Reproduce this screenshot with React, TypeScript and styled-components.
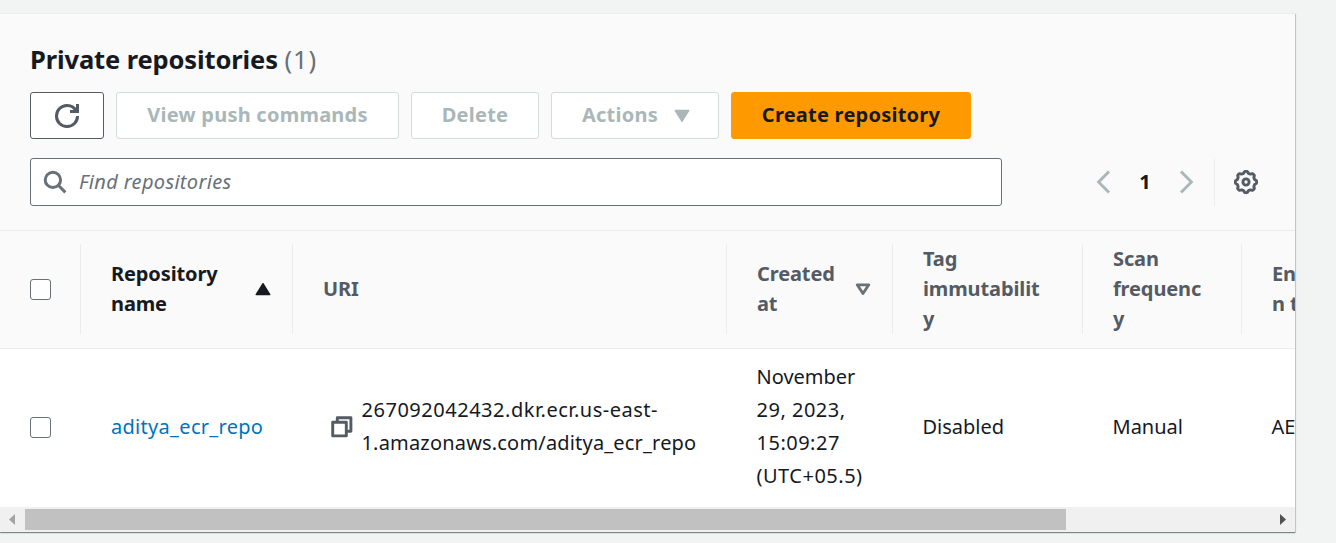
import React from 'react';
import styled, { createGlobalStyle } from 'styled-components';

const GlobalStyle = createGlobalStyle`
  *, *::before, *::after { box-sizing: border-box; }
  body {
    margin: 0;
    background: #f2f3f3;
    color: #16191f;
    font-family: "Noto Sans", "Open Sans", sans-serif;
    font-size: 20px;
    overflow: hidden;
  }
  button, input { font: inherit; }
  svg { display: block; flex: none; }
`;

const Page = styled.main`
  height: 543px;
  padding-top: 13px;
`;

const Panel = styled.section`
  width: 1295px;
  height: 519px;
  background: #fff;
  border-top: 1px solid #eaeded;
  box-shadow: 0 1px 1px 0 rgba(0, 28, 36, 0.4), 1px 1px 1px 0 rgba(0, 28, 36, 0.15);
  overflow: hidden;
`;

const PanelHeader = styled.header`
  height: 217px;
  padding: 27px 30px 0;
  background: #fafafa;
  border-bottom: 1px solid #eaeded;
`;

const Title = styled.h2`
  margin: 0 0 15px;
  font-size: 25.5px;
  line-height: 36px;
  font-weight: 700;
  letter-spacing: -0.12px;
`;

const Counter = styled.span`
  font-weight: 400;
  color: #687078;
  letter-spacing: 0.9px;
`;

const ButtonRow = styled.div`
  display: flex;
  gap: 12px;
`;

const Button = styled.button<{ $width: number; $kind?: 'normal' | 'primary' | 'disabled' }>`
  display: flex;
  align-items: center;
  justify-content: center;
  gap: 16px;
  width: ${(p) => p.$width}px;
  height: 47px;
  padding: 0 0 2px;
  border: 1px solid ${(p) => (p.$kind === 'primary' ? '#ff9900' : p.$kind === 'disabled' ? '#d5dbdb' : '#545b64')};
  border-radius: 3px;
  background: ${(p) => (p.$kind === 'primary' ? '#ff9900' : '#fff')};
  color: ${(p) => (p.$kind === 'primary' ? '#16191f' : p.$kind === 'disabled' ? '#aab7b8' : '#545b64')};
  font-weight: 700;
  letter-spacing: 0.24px;
  white-space: nowrap;
  & > svg { position: relative; top: 1px; }
`;

const MenuButton = styled(Button)`
  padding-left: 2px;
`;

const FilterRow = styled.div`
  display: flex;
  align-items: center;
  margin-top: 19px;
`;

const SearchBox = styled.label`
  display: flex;
  align-items: center;
  gap: 12.5px;
  width: 972px;
  height: 48px;
  padding-left: 11.5px;
  border: 1px solid #687078;
  border-radius: 3px;
  background: #fff;
`;

const SearchInput = styled.input`
  flex: 1;
  padding: 0 0 2px;
  border: 0;
  outline: 0;
  background: transparent;
  font-style: italic;
  letter-spacing: 0.33px;
  &::placeholder { color: #687078; opacity: 1; }
`;

const Pagination = styled.nav`
  display: flex;
  align-items: center;
  margin-left: 94px;
`;

const PageNumber = styled.span`
  width: 68px;
  padding-bottom: 1px;
  text-align: center;
  font-weight: 700;
`;

const Settings = styled.div`
  display: flex;
  align-items: center;
  height: 47px;
  margin-left: 20px;
  padding-left: 19px;
  border-left: 1px solid #eaeded;
`;

const Row = styled.div`
  display: grid;
  grid-template-columns: 81px 212px 434px 166px 190px 159px 190px;
`;

const HeadRow = styled(Row)`
  height: 118px;
  padding: 13px 0 14px;
  background: #fafafa;
  border-bottom: 1px solid #eaeded;
`;

const BodyRow = styled(Row)`
  height: 158px;
`;

const HeadCell = styled.div<{ $active?: boolean }>`
  display: flex;
  align-items: center;
  justify-content: space-between;
  height: 90px;
  padding: 0 21px 1px 30px;
  border-right: 1px solid #eaeded;
  color: ${(p) => (p.$active ? '#16191f' : '#545b64')};
  font-weight: 700;
  line-height: 30px;
  letter-spacing: -0.12px;
  white-space: pre;
`;

const CheckHeadCell = styled(HeadCell)`
  padding-bottom: 0;
`;

const Cell = styled.div<{ $spacing?: number }>`
  display: flex;
  align-items: center;
  padding: 0 0 4px 29.5px;
  line-height: 33px;
  letter-spacing: ${(p) => p.$spacing ?? 0}px;
  white-space: pre;
`;

const NameCell = styled(Cell)`
  padding-left: 30px;
`;

const CheckCell = styled(Cell)`
  padding: 0 0 1px 30px;
`;

const UriCell = styled(Cell)`
  gap: 9px;
  padding-left: 37.5px;
  & > svg { position: relative; top: 1px; }
`;

const Line = styled.span<{ $spacing: number }>`
  display: block;
  letter-spacing: ${(p) => p.$spacing}px;
`;

const Checkbox = styled.span`
  width: 21px;
  height: 21px;
  border: 1px solid #687078;
  border-radius: 3px;
  background: #fff;
`;

const RepoLink = styled.a`
  color: #0073bb;
  text-decoration: none;
`;

const Scrollbar = styled.div`
  display: flex;
  align-items: center;
  justify-content: space-between;
  height: 25px;
  padding-right: 9px;
  background: #f0f0f0;
`;

const ScrollLeft = styled.div`
  width: 25px;
  padding-left: 9px;
`;

const Thumb = styled.div`
  width: 1041px;
  height: 21px;
  margin-right: auto;
  background: #c1c1c1;
`;

const RefreshIcon = () => (
  <svg width="24" height="24" viewBox="0 0 16 16" fill="none" stroke="currentColor" strokeWidth="2">
    <path d="M10 5h5V0" />
    <path d="M15 8a6.96 6.96 0 0 1-7 7 6.96 6.96 0 0 1-7-7 6.96 6.96 0 0 1 7-7 6.87 6.87 0 0 1 6.3 4" />
  </svg>
);

const SearchIcon = () => (
  <svg width="24" height="24" viewBox="0 0 16 16" fill="none" stroke="#687078" strokeWidth="2">
    <circle cx="6.6" cy="6.6" r="5.1" />
    <path d="M10.2 10.2l4.7 4.7" />
  </svg>
);

const Chevron = ({ right }: { right?: boolean }) => (
  <svg width="15" height="24" viewBox="0 0 15 24" fill="none" stroke="#aab7b8" strokeWidth="2.9">
    <path d={right ? 'M2 1.5l10.4 10.5L2 22.5' : 'M13 1.5L2.6 12 13 22.5'} />
  </svg>
);

const gearPath = (() => {
  const points: string[] = [];
  for (let i = 0; i < 96; i++) {
    const a = (i / 96) * Math.PI * 2;
    const r = 9.8 + 0.9 * Math.tanh(2.2 * Math.cos(8 * a));
    points.push(`${(12 + r * Math.sin(a)).toFixed(2)} ${(12 - r * Math.cos(a)).toFixed(2)}`);
  }
  return `M${points.join('L')}Z`;
})();

const GearIcon = () => (
  <svg width="24" height="24" viewBox="0 0 24 24" fill="none" stroke="#545b64" strokeLinejoin="round">
    <path d={gearPath} strokeWidth="2.9" />
    <circle cx="12" cy="12" r="3.1" strokeWidth="2.9" />
  </svg>
);

const CopyIcon = () => (
  <svg width="22" height="22" viewBox="0 0 22 22" fill="none" stroke="#545b64" strokeWidth="2.9" strokeLinejoin="round">
    <path d="M1.7 6.3h13.6v13.6H1.7z" />
    <path d="M6.3 6.3V1.8h13.6v13.5h-4.6" />
  </svg>
);

const Triangle = ({ up, hollow }: { up?: boolean; hollow?: boolean }) => (
  <svg width="16" height="14" viewBox="0 0 16 14" strokeLinejoin="round" strokeWidth={hollow ? 2.8 : 1.4}
    fill={hollow ? 'none' : 'currentColor'} stroke={hollow ? '#687078' : 'currentColor'}>
    <path d={up ? 'M8 1.7L14.8 12.5H1.2z' : hollow ? 'M2.2 2.8h11.6L8 11.6z' : 'M1.2 1.5h13.6L8 12.3z'} />
  </svg>
);

const ScrollArrow = ({ right }: { right?: boolean }) => (
  <svg width="6" height="11" viewBox="0 0 6 11" fill={right ? '#505050' : '#a3a3a3'}>
    <path d={right ? 'M0 0l6 5.5L0 11z' : 'M6 0L0 5.5 6 11z'} />
  </svg>
);

export default function App() {
  return (
    <>
      <GlobalStyle />
      <Page>
        <Panel>
          <PanelHeader>
            <Title>Private repositories <Counter>(1)</Counter></Title>
            <ButtonRow>
              <Button $width={74} aria-label="Refresh"><RefreshIcon /></Button>
              <Button $width={283} $kind="disabled">View push commands</Button>
              <Button $width={128} $kind="disabled">Delete</Button>
              <MenuButton $width={168} $kind="disabled">Actions<Triangle /></MenuButton>
              <Button $width={240} $kind="primary">Create repository</Button>
            </ButtonRow>
            <FilterRow>
              <SearchBox>
                <SearchIcon />
                <SearchInput placeholder="Find repositories" />
              </SearchBox>
              <Pagination>
                <Chevron />
                <PageNumber>1</PageNumber>
                <Chevron right />
              </Pagination>
              <Settings><GearIcon /></Settings>
            </FilterRow>
          </PanelHeader>
          <HeadRow>
            <CheckHeadCell><Checkbox /></CheckHeadCell>
            <HeadCell $active>{'Repository\nname'}<Triangle up /></HeadCell>
            <HeadCell>URI</HeadCell>
            <HeadCell>{'Created\nat'}<Triangle hollow /></HeadCell>
            <HeadCell>{'Tag\nimmutabilit\ny'}</HeadCell>
            <HeadCell>{'Scan\nfrequenc\ny'}</HeadCell>
            <HeadCell>{'Encryptio\nn type'}</HeadCell>
          </HeadRow>
          <BodyRow>
            <CheckCell><Checkbox /></CheckCell>
            <NameCell $spacing={0.3}><RepoLink>aditya_ecr_repo</RepoLink></NameCell>
            <UriCell>
              <CopyIcon />
              <div>
                <Line $spacing={0.52}>267092042432.dkr.ecr.us-east-</Line>
                <Line $spacing={0.18}>1.amazonaws.com/aditya_ecr_repo</Line>
              </div>
            </UriCell>
            <Cell>
              <div>
                <Line $spacing={0}>November</Line>
                <Line $spacing={0.5}>29, 2023,</Line>
                <Line $spacing={0.5}>15:09:27</Line>
                <Line $spacing={0.5}>(UTC+05.5)</Line>
              </div>
            </Cell>
            <Cell>Disabled</Cell>
            <Cell>Manual</Cell>
            <Cell>AES-256</Cell>
          </BodyRow>
          <Scrollbar>
            <ScrollLeft><ScrollArrow /></ScrollLeft>
            <Thumb />
            <ScrollArrow right />
          </Scrollbar>
        </Panel>
      </Page>
    </>
  );
}
